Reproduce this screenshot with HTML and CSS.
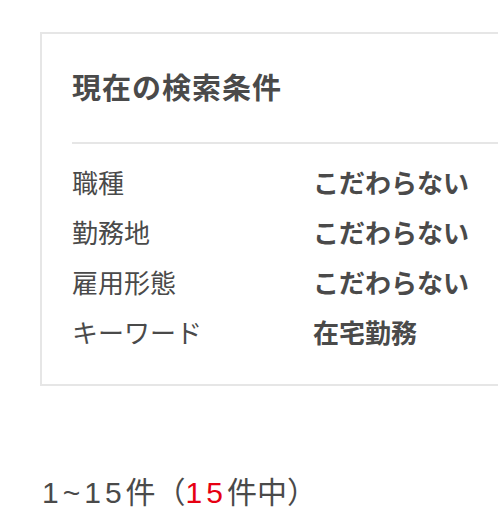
FILE: index.html
```html
<!DOCTYPE html>
<html lang="ja">
<head>
<meta charset="utf-8">
<link rel="stylesheet" href="styles.css">
</head>
<body>
<div class="page">
  <div class="clip">
    <section class="conditions">
      <h2 class="conditions-title">現在の検索条件</h2>
      <div class="divider"></div>
      <dl class="cond-list">
        <div class="cond-row"><dt>職種</dt><dd>こだわらない</dd></div>
        <div class="cond-row"><dt>勤務地</dt><dd>こだわらない</dd></div>
        <div class="cond-row"><dt>雇用形態</dt><dd>こだわらない</dd></div>
        <div class="cond-row"><dt>キーワード</dt><dd>在宅勤務</dd></div>
      </dl>
    </section>
  </div>
  <p class="result-count"><span class="num">1~15</span>件（<span class="num hit">15</span>件中）</p>
</div>
</body>
</html>
```
FILE: styles.css
```css
html, body {
  margin: 0;
  padding: 0;
  background: #fff;
  overflow: hidden;
}
body {
  font-family: "Noto Sans CJK JP", "Noto Sans", sans-serif;
  color: #4a4a4a;
}
.page {
  padding: 32px 0 0 40px;
}
.clip {
  overflow: hidden;
}
.conditions {
  border: 2px solid #e6e6e6;
  border-right: 0;
  padding: 0 0 28px 30px;
  margin-right: -40px;
}
.conditions-title {
  margin: 0;
  padding-top: 32px;
  font-size: 29px;
  line-height: 40px;
  font-weight: bold;
  letter-spacing: 1px;
}
.divider {
  margin-top: 36px;
  border-top: 2px solid #e6e6e6;
}
.cond-list {
  margin: 12px 0 0 0;
  padding: 0;
}
.cond-row {
  display: flex;
  height: 50px;
  align-items: center;
  font-size: 26px;
}
.cond-row dt {
  width: 241px;
  margin: 0;
  flex-shrink: 0;
}
.cond-row dd {
  margin: 0;
  font-weight: bold;
  white-space: nowrap;
}
.result-count {
  margin: 84px 0 0 2px;
  font-family: "Noto Sans CJK JP", sans-serif;
  font-size: 30px;
  line-height: 40px;
}
.num {
  font-family: "Liberation Sans", sans-serif;
  letter-spacing: 4px;
}
.hit {
  color: #e60012;
}
```
